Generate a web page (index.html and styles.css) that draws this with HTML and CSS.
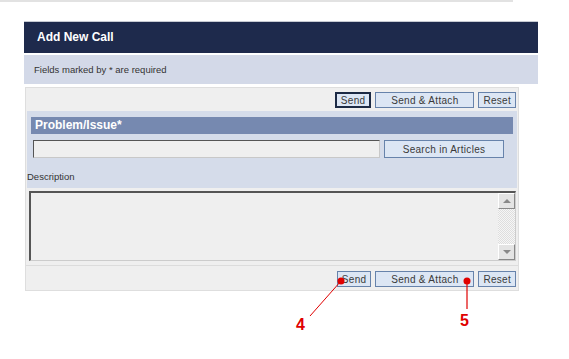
FILE: index.html
```html
<!DOCTYPE html>
<html lang="en">
<head>
  <meta charset="UTF-8" />
  <title>Add New Call</title>
  <link rel="stylesheet" href="styles.css">
</head>
<body>
  <div class="topline"></div>

  <div class="card">
    <div class="header">Add New Call</div>
    <div class="note">Fields marked by * are required</div>

    <div class="panel">
      <div class="toolbar">
        <button class="btn focus">Send</button>
        <button class="btn wide">Send &amp; Attach</button>
        <button class="btn">Reset</button>
      </div>

      <div class="section">
        <div class="title">Problem/Issue*</div>
        <div class="search-row">
          <div class="field"></div>
          <button class="btn search">Search in Articles</button>
        </div>
        <div class="label">Description</div>
      </div>

      <div class="desc">
        <div class="desc-text"></div>
        <div class="scrollbar">
          <span class="arrow up"></span>
          <span class="track"></span>
          <span class="arrow down"></span>
        </div>
      </div>

      <div class="toolbar bottom">
        <button class="btn">Send</button>
        <button class="btn wide">Send &amp; Attach</button>
        <button class="btn">Reset</button>
      </div>
    </div>
  </div>

  <!-- callouts -->
  <svg class="callouts" width="569" height="359">
    <line x1="341" y1="281" x2="310" y2="316" stroke="#e00000" stroke-width="1" />
    <circle cx="341" cy="281" r="3.5" fill="#e00000" />
    <line x1="467" y1="281" x2="467" y2="309" stroke="#e00000" stroke-width="1.2" />
    <circle cx="467" cy="281" r="3.5" fill="#e00000" />
  </svg>
  <span class="mark m4">4</span>
  <span class="mark m5">5</span>
</body>
</html>
```

FILE: styles.css
```css
* { box-sizing: border-box; }
body {
  margin: 0;
  background: #fff;
  font-family: "Liberation Sans", Arial, sans-serif;
  font-size: 10px;
  color: #222;
  position: relative;
  width: 569px;
  height: 359px;
  overflow: hidden;
}
.topline {
  width: 513px;
  height: 2px;
  background: #e2e2e2;
}
.card {
  margin: 19px 0 0 24px;
  width: 514px;
}
.header {
  border-top: 1px solid #c6cad2;
  background: #1e2a4c;
  color: #fff;
  font-weight: bold;
  font-size: 12px;
  height: 32px;
  line-height: 31px;
  padding-left: 13px;
}
.note {
  margin-top: 2px;
  background: #d3d9e8;
  height: 29px;
  line-height: 29px;
  padding-left: 10px;
  font-size: 9.5px;
  color: #333;
}
.panel {
  margin: 3px 0 0 1px;
  width: 494px;
  background: #efefef;
  border: 1px solid #dedede;
}
.toolbar {
  display: flex;
  justify-content: flex-end;
  gap: 4px;
  padding: 4px 2px 3px;
}
.toolbar.bottom {
  border-top: 1px solid #dcdcdc;
  margin-top: 4px;
  padding: 5px 2px 3px;
}
.btn {
  font-family: "Liberation Sans", Arial, sans-serif;
  font-size: 10px;
  color: #3a3a3a;
  background: #dce6f4;
  border: 1px solid #6783ab;
  height: 16px;
  padding: 0 4px;
  margin: 0;
  letter-spacing: 0.3px;
}
.btn.focus { border: 2px solid #1c2a44; }
.btn.wide { width: 99px; }
.section {
  background: #d5dcea;
  padding: 6px 4px 2px;
  margin: 0 1px;
}
.title {
  background: #7689b0;
  color: #fff;
  font-weight: bold;
  font-size: 12px;
  height: 17px;
  line-height: 17px;
  padding-left: 4px;
}
.search-row {
  display: flex;
  align-items: center;
  gap: 4px;
  margin: 6px 0 0 2px;
}
.field {
  width: 347px;
  height: 18px;
  background: #efefef;
  border: 1px solid #c8c8c8;
  border-top-color: #555;
  border-left-color: #555;
}
.btn.search {
  width: 120px;
  height: 18px;
}
.label {
  margin: 10px 0 0 -4px;
  height: 18px;
  line-height: 18px;
  font-size: 9.5px;
  color: #333;
}
.desc {
  display: flex;
  margin: 3px 2px 0 3px;
  height: 70px;
  border: 1px solid #ccc;
  border-top: 2px solid #555;
  border-left: 2px solid #555;
  background: #efefef;
}
.desc-text { flex: 1; }
.scrollbar {
  width: 17px;
  display: flex;
  flex-direction: column;
  background: repeating-conic-gradient(#dedede 0 25%, #f6f6f6 0 50%) 0 0 / 2px 2px;
}
.track { flex: 1; }
.arrow {
  height: 16px;
  background: #e4e4e4;
  border: 1px solid #888;
  border-top-color: #fff;
  border-left-color: #fff;
  display: flex;
  align-items: center;
  justify-content: center;
}
.arrow::after {
  content: "";
  border-left: 4px solid transparent;
  border-right: 4px solid transparent;
}
.arrow.up::after { border-bottom: 4px solid #888; }
.arrow.down::after { border-top: 4px solid #888; }
.callouts {
  position: absolute;
  left: 0;
  top: 0;
  pointer-events: none;
}
.mark {
  position: absolute;
  color: #e00000;
  font-weight: bold;
  font-size: 16px;
  font-family: "Liberation Sans", Arial, sans-serif;
}
.m4 { left: 296px; top: 316px; }
.m5 { left: 460px; top: 312px; }
```
